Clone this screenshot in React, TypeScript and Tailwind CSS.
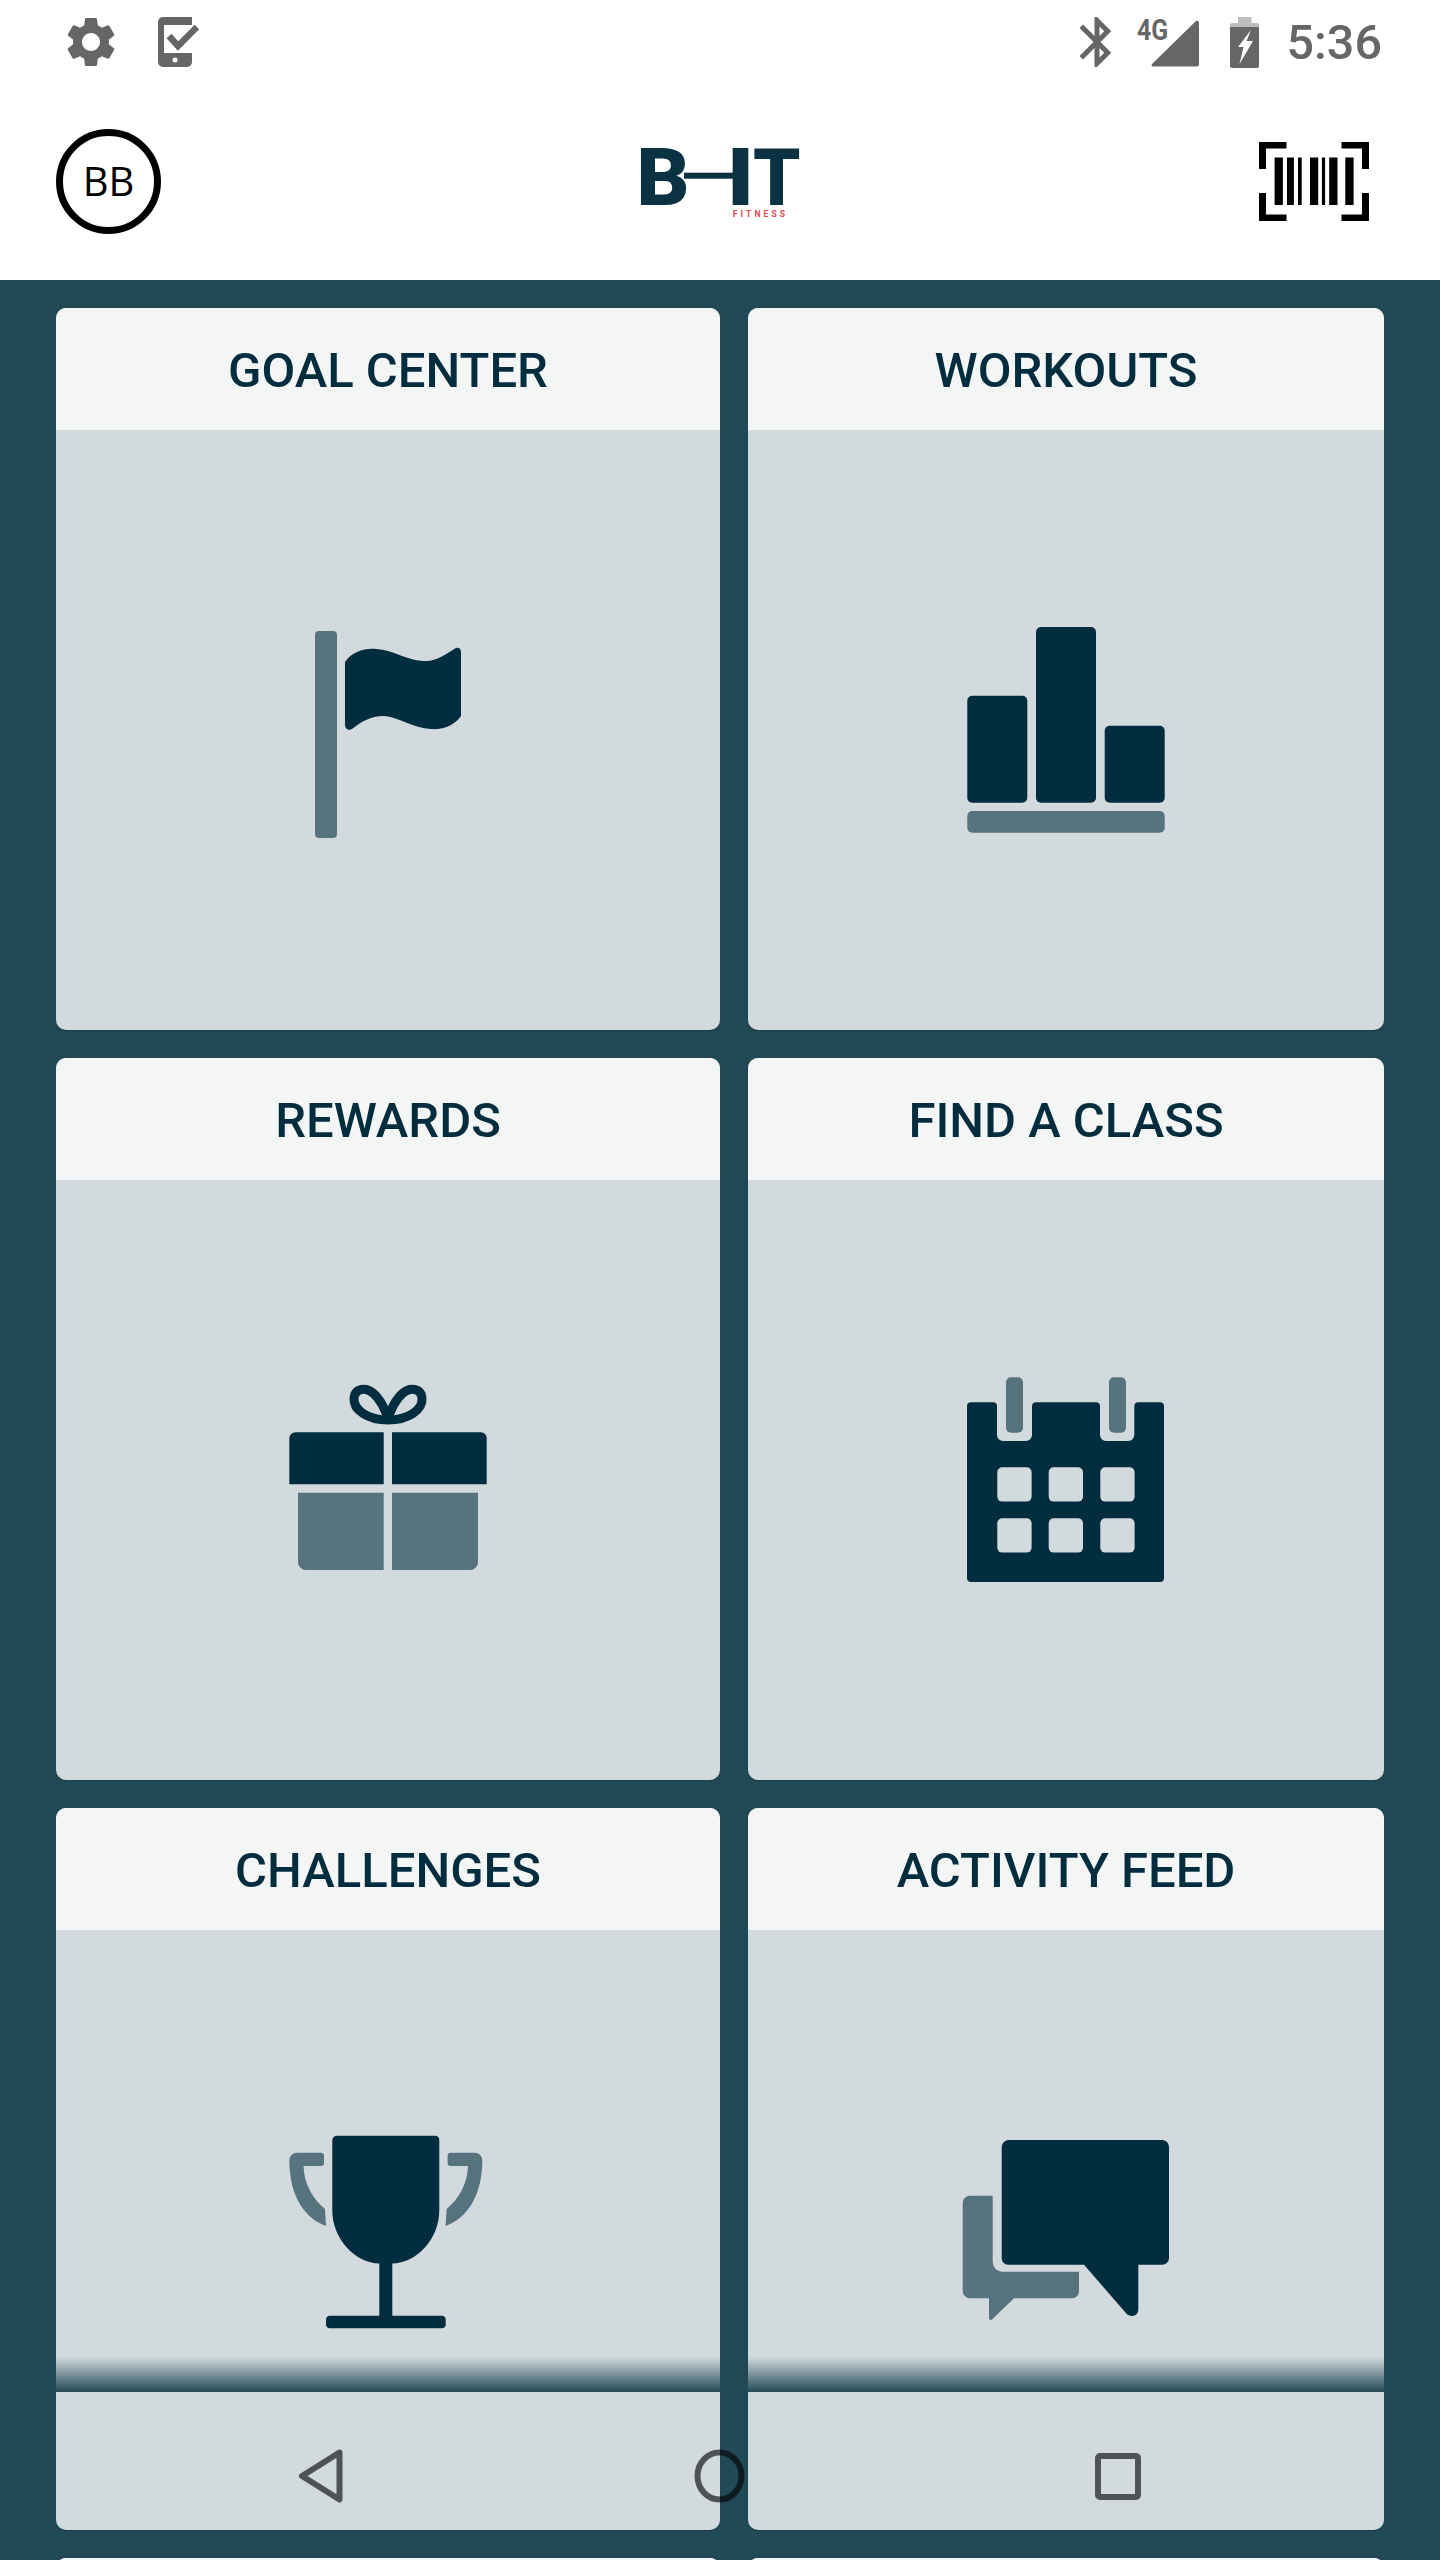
import { MdBluetooth, MdSettings } from "react-icons/md";

const DARK = "#022d3e";
const MID = "#57737e";
const BODY = "#d2dade";

function FlagIcon() {
  return (
    <svg viewBox="0 0 240 240" className="w-[240px] h-[240px]">
      <rect x="47" y="21" width="22" height="207" rx="4" fill={MID} />
      <path
        d="M77 52 C84 42 96 38 108 39 C127 40 141 52 158 51 C169 51 178 44 188 38 C191 37 193 39 193 42 L193 106 C187 115 175 120 163 119 C145 118 130 107 116 106 C102 106 93 112 84 119 C81 121 77 119 77 115 Z"
        fill={DARK}
      />
    </svg>
  );
}

function BarsIcon() {
  return (
    <svg viewBox="0 0 240 240" className="w-[240px] h-[240px]">
      <rect x="21.3" y="85.7" width="60" height="107" rx="5" fill={DARK} />
      <rect x="90" y="17" width="60" height="175.7" rx="5" fill={DARK} />
      <rect x="158.7" y="115.7" width="60" height="77" rx="5" fill={DARK} />
      <rect x="21.3" y="201" width="197.4" height="21.7" rx="5" fill={MID} />
    </svg>
  );
}

function GiftIcon() {
  return (
    <svg viewBox="0 0 240 240" className="w-[240px] h-[240px]">
      <path d="M120 60 C100 60 85 50 86 38 C87 28 98 27 105 33 C112 39 118 50 120 60 C122 50 128 39 135 33 C142 27 153 28 154 38 C155 50 140 60 120 60 Z" fill="none" stroke={DARK} strokeWidth="9" strokeLinejoin="round" />
      <path d="M27 72.3 H115.7 V124.3 H21.3 V78 a6 6 0 0 1 6 -5.7 Z" fill={DARK} />
      <path d="M124 72.3 H213 a6 6 0 0 1 5.7 5.7 V124.3 H124 Z" fill={DARK} />
      <path d="M30 132.7 H115.7 V210 H38 a8 8 0 0 1 -8 -8 Z" fill={MID} />
      <path d="M124 132.7 H210 V202 a8 8 0 0 1 -8 8 H124 Z" fill={MID} />
    </svg>
  );
}

function CalendarIcon() {
  const cols = [51.3, 102.7, 154.3];
  const rows = [107.3, 158.3];
  return (
    <svg viewBox="0 0 240 240" className="w-[240px] h-[240px]">
      <path
        d="M25 42.3 H47 a4 4 0 0 1 4 4 V75 a6 6 0 0 0 6 6 H80 a6 6 0 0 0 6 -6 V46.3 a4 4 0 0 1 4 -4 H150 a4 4 0 0 1 4 4 V75 a6 6 0 0 0 6 6 H182.3 a6 6 0 0 0 6 -6 V46.3 a4 4 0 0 1 4 -4 H214 a4 4 0 0 1 4 4 V218 a4 4 0 0 1 -4 4 H25 a4 4 0 0 1 -4 -4 V46.3 a4 4 0 0 1 4 -4 Z"
        fill={DARK}
      />
      <rect x="60" y="17.3" width="17" height="55.4" rx="5" fill={MID} />
      <rect x="163" y="17.3" width="17" height="55.4" rx="5" fill={MID} />
      {rows.map((y) =>
        cols.map((x) => <rect key={`${x}-${y}`} x={x} y={y} width="34.3" height="34.3" rx="5" fill={BODY} />)
      )}
    </svg>
  );
}

function TrophyIcon() {
  return (
    <svg viewBox="0 0 240 240" className="w-[240px] h-[240px]">
      <path d="M29 42.7 H53 a3 3 0 0 1 3 3 V53 a3 3 0 0 1 -3 3 H35.5 C36 75 46 90 57 99 L58 116 C36 108 21.3 85 21.3 50 a7.5 7.5 0 0 1 7.7 -7.3 Z" fill={MID} />
      <path d="M206.6 42.7 H182.6 a3 3 0 0 0 -3 3 V53 a3 3 0 0 0 3 3 H200 C199.6 75 189.6 90 178.6 99 L177.6 116 C199.6 108 214.3 85 214.3 50 a7.5 7.5 0 0 0 -7.7 -7.3 Z" fill={MID} />
      <path d="M69 25.7 H167 a4.5 4.5 0 0 1 4.3 4.5 V100 C171.3 130 148 153 124.3 153.5 V206 H111.3 V153.5 C88 153 64.3 130 64.3 100 V30.2 a4.5 4.5 0 0 1 4.7 -4.5 Z" fill={DARK} />
      <rect x="58" y="205.7" width="119.7" height="12.6" rx="4" fill={DARK} />
    </svg>
  );
}

function ChatIcon() {
  return (
    <svg viewBox="0 0 240 240" className="w-[240px] h-[240px]">
      <path d="M24 85.7 H46.7 V150 C46.7 157 50 161.7 57 161.7 H133 V181 a7 7 0 0 1 -7 7.3 H68 L46 209.5 C45 210.5 43 210 43 208 V188.3 H24 a7.3 7.3 0 0 1 -7.3 -7.3 V93 a7.3 7.3 0 0 1 7.3 -7.3 Z" fill={MID} />
      <path d="M63 30 H216 a7 7 0 0 1 7 7 V148 a6.7 6.7 0 0 1 -6.7 6.7 H192.3 V200 a6 6 0 0 1 -6 6 C183 206 181 204.5 179 202 L138 154.7 H62 a6.5 6.5 0 0 1 -6.3 -6.7 V37 a7 7 0 0 1 7.3 -7 Z" fill={DARK} />
    </svg>
  );
}

const cards = [
  { title: "GOAL CENTER", icon: <FlagIcon /> },
  { title: "WORKOUTS", icon: <BarsIcon /> },
  { title: "REWARDS", icon: <GiftIcon /> },
  { title: "FIND A CLASS", icon: <CalendarIcon /> },
  { title: "CHALLENGES", icon: <TrophyIcon /> },
  { title: "ACTIVITY FEED", icon: <ChatIcon /> },
  { title: "", icon: null },
  { title: "", icon: null },
];

function Card({ title, icon }: { title: string; icon: React.ReactNode }) {
  return (
    <div className="h-[722px] rounded-[10px] overflow-hidden flex flex-col bg-[#d2dade] shadow-[0_1px_2px_rgba(0,0,0,0.2)]">
      <div className="h-[122px] pt-[3px] bg-[#f4f6f6] flex items-center justify-center text-[49px] font-medium text-[#022d3e] font-['Roboto',sans-serif]">
        {title}
      </div>
      <div className="flex-1 flex items-center justify-center">{icon}</div>
    </div>
  );
}

function PhoneCheck() {
  return (
    <svg viewBox="0 0 41 50" className="w-[41px] h-[50px]">
      <rect x="0" y="0" width="34" height="50" rx="5" fill="#666" />
      <rect x="6" y="8" width="35" height="28" fill="#fff" />
      <rect x="30" y="0" width="4" height="8" fill="#666" />
      <circle cx="17" cy="43" r="2.5" fill="#fff" />
      <path d="M11 19 L20 29 L39 10" fill="none" stroke="#666" strokeWidth="6.5" />
    </svg>
  );
}

function SignalIcon() {
  return (
    <svg viewBox="0 -8 62 58" className="w-[62px] h-[58px] mt-[-8px]">
      <text x="0" y="23" fontFamily="Roboto, sans-serif" fontWeight="700" fontSize="29" fill="#666" textLength="31" lengthAdjust="spacingAndGlyphs">
        4G
      </text>
      <path d="M59 4 a2 2 0 0 1 3 1.5 V47.5 a2 2 0 0 1 -2 2 H16 a1.5 1.5 0 0 1 -1 -2.5 Z" fill="#666" />
    </svg>
  );
}

function BatteryIcon() {
  return (
    <svg viewBox="0 0 29 51" className="w-[29px] h-[51px]">
      <path d="M8 0 H21.6 V6 H27 a2 2 0 0 1 2 2 V12 H0 V8 a2 2 0 0 1 2 -2 H8 Z" fill="#bdbdbd" />
      <path d="M0 10 H29 V49 a2 2 0 0 1 -2 2 H2 a2 2 0 0 1 -2 -2 Z" fill="#666" />
      <path d="M21 13 L8 30 H13.5 L9.5 47 L23 24 H16.5 Z" fill="#fff" />
    </svg>
  );
}

function BarcodeIcon() {
  const bars = [
    [15.6, 8.3],
    [28, 6.9],
    [39, 3.7],
    [51, 8.2],
    [62.9, 3.2],
    [70.2, 8.3],
    [86.3, 8.3],
  ];
  return (
    <svg viewBox="0 0 110 79" className="w-[110px] h-[79px]">
      <path d="M0 0 H27.5 V6.5 H7 V27 H0 Z" fill="#000" />
      <path d="M110 0 H82.5 V6.5 H103 V27 H110 Z" fill="#000" />
      <path d="M0 79 H27.5 V72.5 H7 V51 H0 Z" fill="#000" />
      <path d="M110 79 H82.5 V72.5 H103 V51 H110 Z" fill="#000" />
      {bars.map(([x, w]) => (
        <rect key={x} x={x} y="15.5" width={w} height="47.5" fill="#000" />
      ))}
    </svg>
  );
}

function Logo() {
  return (
    <svg viewBox="-6 0 172 100" className="w-[172px] h-[100px] ml-[20px] mt-[-2px]">
      <text x="-3.5" y="75" fontFamily="Roboto, sans-serif" fontWeight="900" fontSize="80" fill="#0b3242" textLength="53" lengthAdjust="spacingAndGlyphs">
        B
      </text>
      <rect x="44" y="42.7" width="50" height="6" fill="#0b3242" />
      <rect x="92.7" y="18" width="15.6" height="57" fill="#0b3242" />
      <text x="113" y="75" fontFamily="Roboto, sans-serif" fontWeight="900" fontSize="80" fill="#0b3242" textLength="47.5" lengthAdjust="spacingAndGlyphs">
        T
      </text>
      <text x="92.7" y="86.5" fontFamily="Roboto, sans-serif" fontWeight="700" fontSize="8.5" fill="#e5484d" textLength="52.3">
        FITNESS
      </text>
    </svg>
  );
}

export default function App() {
  return (
    <div className="relative w-[1440px] h-[2560px] overflow-hidden bg-[#224a56] font-['Roboto',sans-serif]">
      {/* Header */}
      <div className="h-[280px] bg-white flex flex-col">
        <div className="h-[84px] flex items-center justify-between pl-[61px] pr-[58px]">
          <div className="flex items-center gap-[37px]">
            <MdSettings size={60} color="#666" />
            <PhoneCheck />
          </div>
          <div className="flex items-center">
            <MdBluetooth size={60} color="#666" />
            <div className="ml-[10px]">
              <SignalIcon />
            </div>
            <div className="ml-[31px]">
              <BatteryIcon />
            </div>
            <span className="ml-[28px] mt-[3px] text-[48.5px] font-medium leading-none text-[#666]">5:36</span>
          </div>
        </div>
        <div className="flex-1 flex items-center justify-between pl-[56px] pr-[71px] pb-[2px]">
          <div className="w-[105px] h-[105px] rounded-full border-[7px] border-black flex items-center justify-center text-[40px] text-black font-['Open_Sans',sans-serif]">
            BB
          </div>
          <Logo />
          <BarcodeIcon />
        </div>
      </div>

      {/* Cards */}
      <div className="grid grid-cols-[664px_636px] gap-[28px] px-[56px] pt-[28px]">
        {cards.map((c, i) => (
          <Card key={i} title={c.title} icon={c.icon} />
        ))}
      </div>

      {/* Navigation bar over the content */}
      <div className="absolute left-0 right-0 top-[2357px] h-[35px] bg-gradient-to-b from-[#224a5600] to-[#224a56]" />
      <svg viewBox="0 0 1440 168" className="absolute left-0 top-[2392px] w-[1440px] h-[168px]">
        <path d="M339.5 60.5 L302 84 L339.5 107.5 Z" fill="none" stroke="#000" strokeOpacity="0.62" strokeWidth="6" strokeLinejoin="round" />
        <ellipse cx="719.5" cy="84" rx="22" ry="23.5" fill="none" stroke="#000" strokeOpacity="0.62" strokeWidth="6" />
        <rect x="1098" y="64" width="40" height="41" rx="2" fill="none" stroke="#000" strokeOpacity="0.62" strokeWidth="6" />
      </svg>
    </div>
  );
}
